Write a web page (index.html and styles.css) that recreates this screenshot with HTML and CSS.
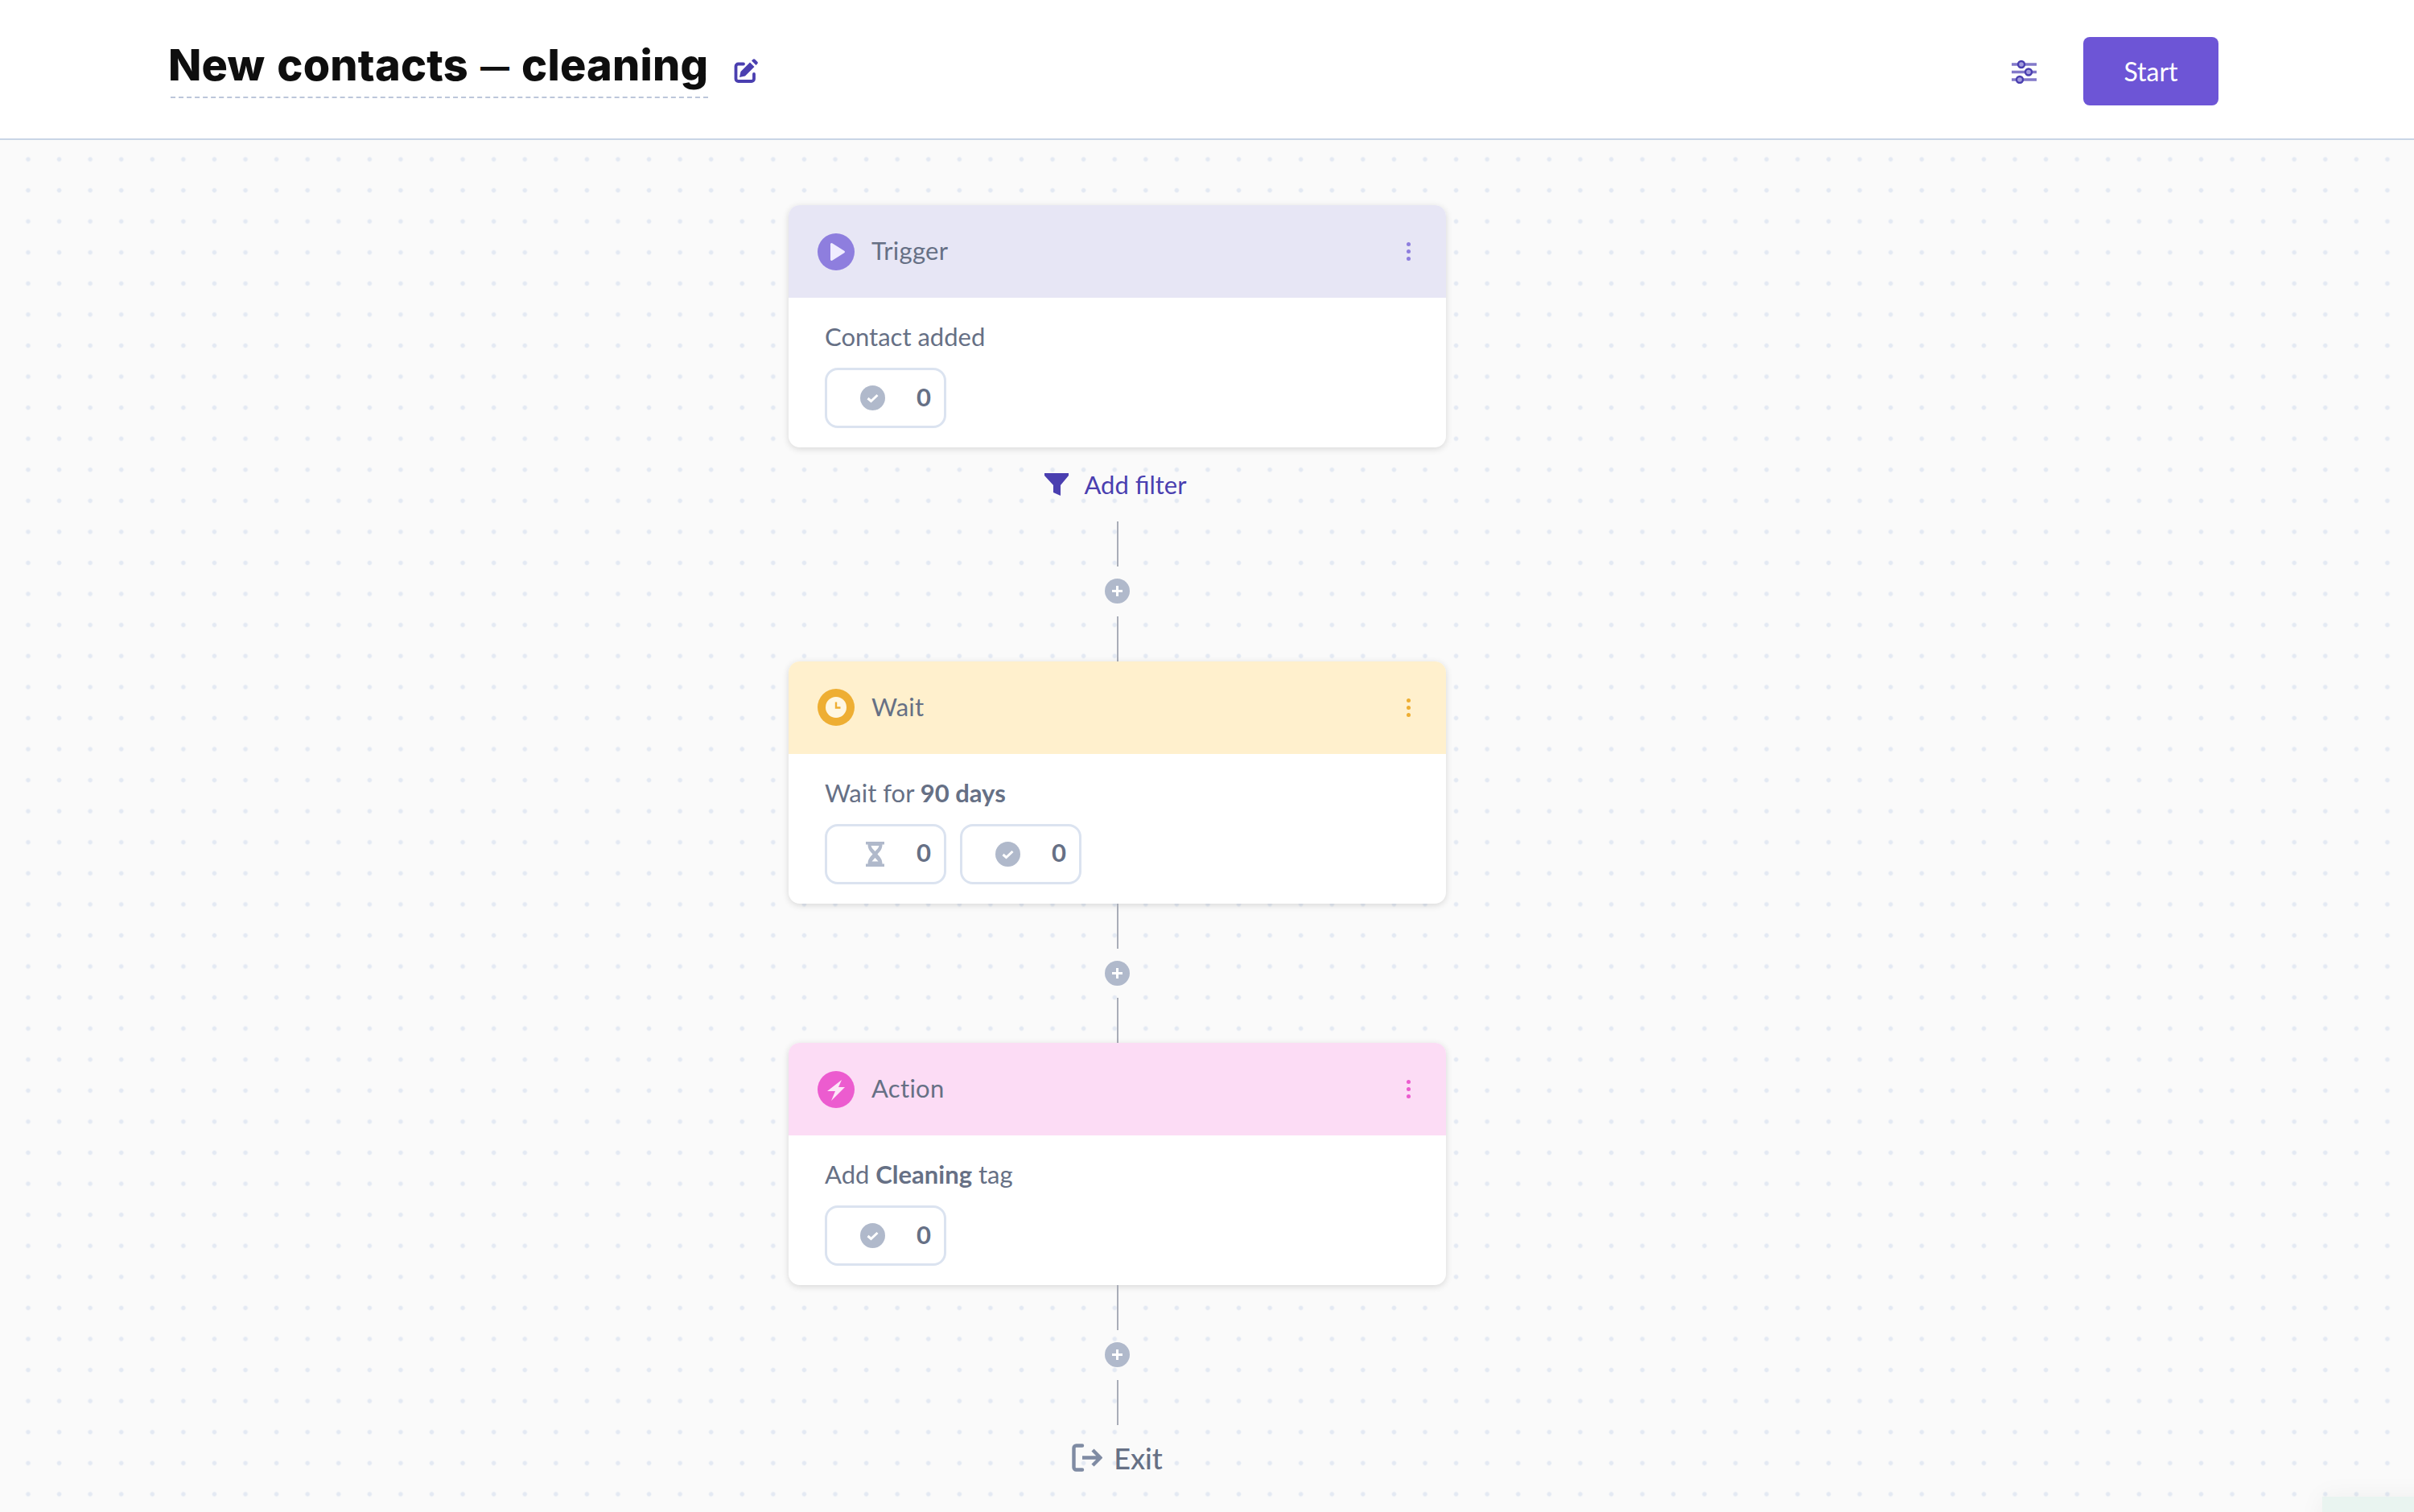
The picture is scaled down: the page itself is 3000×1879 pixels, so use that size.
FILE: index.html
```html
<!DOCTYPE html>
<html lang="en">
<head>
    <meta charset="UTF-8">
    <meta name="viewport" content="width=device-width, initial-scale=1.0">
    <title>New contacts — cleaning</title>
    <link rel="stylesheet" href="styles.css">
</head>
<body>
    <header class="topbar">
        <div class="title-wrap">
            <h1 class="title">New contacts <span class="dash">—</span> cleaning</h1>
            <svg class="edit-icon" viewBox="0 0 30 30">
                <path d="M12 6.500H5.500a3 3 0 0 0-3 3V25a3 3 0 0 0 3 3H22a3 3 0 0 0 3-3v-6" fill="none" stroke="#4a3fb0" stroke-width="3.800" stroke-linecap="round"/>
                <path d="M7 23l1.500-7L20 4.500 25.500 10 14 21.500z" fill="#4a3fb0"/>
                <path d="M22 2.500l1.500-1.500a2 2 0 0 1 3 0L29 3.500a2 2 0 0 1 0 3L27.500 8z" fill="#4a3fb0"/>
            </svg>
        </div>
        <div class="top-actions">
            <svg class="sliders-icon" viewBox="0 0 31 30">
                <g stroke="#8279c9" stroke-width="3.500">
                    <path d="M0 6h31M0 15.500h31M0 25h31"/>
                </g>
                <g fill="#a49dde" stroke="#4a3fb0" stroke-width="2.400">
                    <circle cx="12" cy="6" r="4"/>
                    <circle cx="21" cy="15.500" r="4"/>
                    <circle cx="10" cy="25" r="4"/>
                </g>
            </svg>
            <button class="start-btn">Start</button>
        </div>
    </header>

    <main class="canvas">
        <div class="flow">
            <section class="card card-trigger">
                <div class="card-head">
                    <span class="badge">
                        <svg viewBox="0 0 46 46"><path d="M16 13.500a1.500 1.500 0 0 1 2.200-1.300l15 9.500a1.500 1.500 0 0 1 0 2.600l-15 9.500a1.500 1.500 0 0 1-2.200-1.300z" fill="#efecff"/></svg>
                    </span>
                    <span class="card-name">Trigger</span>
                    <span class="kebab"><i></i><i></i><i></i></span>
                </div>
                <div class="card-body">
                    <p class="card-text">Contact added</p>
                    <div class="chips">
                        <div class="chip">
                            <svg class="chip-icon" viewBox="0 0 31 31"><circle cx="15.500" cy="15.500" r="15.500" fill="#b0b9cb"/><path d="M9.500 16l4 3.500 8-7.500" fill="none" stroke="#fff" stroke-width="3"/></svg>
                            <span class="chip-num">0</span>
                        </div>
                    </div>
                </div>
            </section>

            <a class="add-filter">
                <svg class="funnel" viewBox="0 0 30 28"><path d="M0 0h30v3L20 15v13l-9-4V15L0 3z" fill="#4a3fb0"/></svg>
                <span>Add filter</span>
            </a>

            <div class="connector">
                <span class="line"></span>
                <svg class="plus" viewBox="0 0 31 31"><circle cx="15.500" cy="15.500" r="15.500" fill="#b0b9cb"/><path d="M15.500 9v13M9 15.500h13" stroke="#fff" stroke-width="3"/></svg>
                <span class="line"></span>
            </div>

            <section class="card card-wait">
                <div class="card-head">
                    <span class="badge">
                        <svg viewBox="0 0 46 46"><circle cx="23" cy="23" r="13" fill="#fff7e2"/><path d="M23 16.500v7h5.500" fill="none" stroke="#eeae33" stroke-width="2.400"/></svg>
                    </span>
                    <span class="card-name">Wait</span>
                    <span class="kebab"><i></i><i></i><i></i></span>
                </div>
                <div class="card-body">
                    <p class="card-text">Wait for <b>90 days</b></p>
                    <div class="chips">
                        <div class="chip">
                            <svg class="chip-icon chip-icon-wait" viewBox="0 0 31 31"><path d="M4 0h23v3.500h-2.500c0 6-3.500 9-6 12 2.500 3 6 6 6 12H27V31H4v-3.500h2.500c0-6 3.500-9 6-12-2.500-3-6-6-6-12H4z" fill="#b0b9cb"/><path d="M10.500 5h10c-.5 3-3.500 5-5 7-1.500-2-4.500-4-5-7zM15.500 20l4 4.500h-8z" fill="#fff"/></svg>
                            <span class="chip-num">0</span>
                        </div>
                        <div class="chip">
                            <svg class="chip-icon" viewBox="0 0 31 31"><circle cx="15.500" cy="15.500" r="15.500" fill="#b0b9cb"/><path d="M9.500 16l4 3.500 8-7.500" fill="none" stroke="#fff" stroke-width="3"/></svg>
                            <span class="chip-num">0</span>
                        </div>
                    </div>
                </div>
            </section>

            <div class="connector">
                <span class="line"></span>
                <svg class="plus" viewBox="0 0 31 31"><circle cx="15.500" cy="15.500" r="15.500" fill="#b0b9cb"/><path d="M15.500 9v13M9 15.500h13" stroke="#fff" stroke-width="3"/></svg>
                <span class="line"></span>
            </div>

            <section class="card card-action">
                <div class="card-head">
                    <span class="badge">
                        <svg viewBox="0 0 46 46"><path d="M30 11 12 25h10l-5 12 17-17h-8z" fill="#fde6f8"/></svg>
                    </span>
                    <span class="card-name">Action</span>
                    <span class="kebab"><i></i><i></i><i></i></span>
                </div>
                <div class="card-body">
                    <p class="card-text">Add <b>Cleaning</b> tag</p>
                    <div class="chips">
                        <div class="chip">
                            <svg class="chip-icon" viewBox="0 0 31 31"><circle cx="15.500" cy="15.500" r="15.500" fill="#b0b9cb"/><path d="M9.500 16l4 3.500 8-7.500" fill="none" stroke="#fff" stroke-width="3"/></svg>
                            <span class="chip-num">0</span>
                        </div>
                    </div>
                </div>
            </section>

            <div class="connector">
                <span class="line"></span>
                <svg class="plus" viewBox="0 0 31 31"><circle cx="15.500" cy="15.500" r="15.500" fill="#b0b9cb"/><path d="M15.500 9v13M9 15.500h13" stroke="#fff" stroke-width="3"/></svg>
                <span class="line"></span>
            </div>

            <div class="exit">
                <svg class="exit-icon" viewBox="0 0 38 35">
                    <path d="M13 2.500H5.500a3 3 0 0 0-3 3v24a3 3 0 0 0 3 3H13" fill="none" stroke="#7f8ba3" stroke-width="4.400" stroke-linecap="round"/>
                    <path d="M13 17.500h22M26 8l9.500 9.500L26 27" fill="none" stroke="#7f8ba3" stroke-width="4.400"/>
                </svg>
                <span>Exit</span>
            </div>
        </div>
        <div class="corner-widget"></div>
    </main>
</body>
</html>
```

FILE: styles.css
```css
* {
    box-sizing: border-box;
}
html, body {
    height: 100%;
}
body {
    margin: 0;
    display: flex;
    flex-direction: column;
    overflow: hidden;
    font-family: Lato, sans-serif;
    font-size: 31px;
    color: #667085;
    background: #fafafa;
}

/* top bar */
.topbar {
    flex: none;
    height: 174px;
    padding: 46px 243px 0 212px;
    display: flex;
    justify-content: space-between;
    align-items: flex-start;
    background: #fff;
    border-bottom: 2px solid #c9d5e6;
}
.title-wrap {
    display: flex;
    align-items: flex-start;
}
.title {
    margin: 0;
    height: 76px;
    padding-top: 6px;
    font-family: Inter, sans-serif;
    font-size: 54px;
    line-height: 58px;
    font-weight: 800;
    letter-spacing: 0.2px;
    word-spacing: 3px;
    text-indent: -3px;
    color: #0e0e0e;
    white-space: nowrap;
    border-bottom: 2px dashed #bcc6da;
}
.dash {
    font-size: 36px;
    font-weight: 800;
    vertical-align: 4px;
}
.edit-icon {
    width: 30px;
    height: 30px;
    margin: 27px 0 0 32px;
}
.top-actions {
    display: flex;
    align-items: center;
    gap: 58px;
}
.sliders-icon {
    width: 31px;
    height: 30px;
}
.start-btn {
    width: 168px;
    height: 85px;
    border: none;
    border-radius: 8px;
    background: #6d55d6;
    color: #fff;
    font-family: Lato, sans-serif;
    font-size: 32px;
}

/* canvas */
.canvas {
    flex: 1;
    position: relative;
    padding: 81px 0 0 980px;
    background-color: #fafafa;
    background-image: radial-gradient(circle, #e3e9f3 2px, rgba(227, 233, 243, 0) 3.4px);
    background-size: 38.58px 38.58px;
    background-position: 15.7px 4.7px;
}
.flow {
    width: 817px;
    display: flex;
    flex-direction: column;
    align-items: center;
}

/* cards */
.card {
    width: 100%;
    height: 301px;
    border-radius: 14px;
    background: #fff;
    box-shadow: 0 2px 8px rgba(0, 0, 0, 0.14);
    overflow: hidden;
}
.card-head {
    height: 115px;
    padding: 0 44px 0 36px;
    display: flex;
    align-items: center;
    gap: 21px;
}
.badge {
    width: 46px;
    height: 46px;
    border-radius: 50%;
    display: block;
    flex: none;
}
.badge svg {
    display: block;
    width: 46px;
    height: 46px;
}
.card-name {
    flex: 1;
    margin-top: -3px;
    letter-spacing: 0.3px;
}
.kebab {
    display: flex;
    flex-direction: column;
    gap: 4px;
}
.kebab i {
    display: block;
    width: 5px;
    height: 5px;
    border-radius: 50%;
    background: currentColor;
}
.card-trigger .card-head { background: #e7e6f5; }
.card-trigger .badge { background: #8e7ede; }
.card-trigger .kebab { color: #8e7ede; }
.card-wait .card-head { background: #fff0cd; }
.card-wait .badge { background: #eeae33; }
.card-wait .kebab { color: #eeae33; }
.card-action .card-head { background: #fcdcf5; }
.card-action .badge { background: #ec5ccf; }
.card-action .kebab { color: #ec5ccf; }

.card-body {
    padding: 26px 45px 0;
}
.card-text {
    margin: 0 0 16px;
    line-height: 45px;
}
.card-text b {
    font-weight: 700;
}
.chips {
    display: flex;
    gap: 17px;
}
.chip {
    width: 151px;
    height: 75px;
    padding-right: 16px;
    display: flex;
    align-items: center;
    justify-content: flex-end;
    gap: 39px;
    border: 3px solid #dbe3f0;
    border-radius: 16px;
}
.chip-icon {
    width: 31px;
    height: 31px;
}
.chip-icon-wait {
    margin-right: -3px;
}
.chip-num {
    margin-top: -3px;
    font-weight: 700;
    line-height: 1;
}

/* between the cards */
.add-filter {
    height: 92px;
    margin-right: 4px;
    display: flex;
    align-items: center;
    gap: 19px;
    color: #4a3fb0;
}
.funnel {
    width: 30px;
    height: 28px;
}
.connector {
    height: 173.5px;
    display: flex;
    flex-direction: column;
    align-items: center;
    justify-content: space-between;
}
.line {
    width: 2px;
    height: 56px;
    background: #a9adb8;
}
.plus {
    width: 31px;
    height: 31px;
}
.exit {
    margin-top: 23px;
    display: flex;
    align-items: center;
    gap: 14px;
    font-size: 36px;
    font-weight: 500;
    line-height: 36px;
}
.exit-icon {
    width: 38px;
    height: 35px;
}

/* cut off chat widget in the corner */
.corner-widget {
    position: absolute;
    left: 2886px;
    top: 1686px;
    width: 200px;
    height: 100px;
    background: #e9f4f0;
    box-shadow: 0 0 30px rgba(0, 0, 0, 0.05);
}
```
